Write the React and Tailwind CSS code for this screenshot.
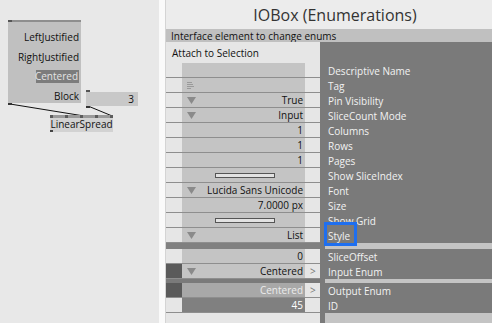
import React from 'react';

const Tri = () => (
  <svg width="9" height="7" viewBox="0 0 9 7" className="shrink-0">
    <polygon points="0,0 9,0 4.5,7" fill="#8a8a8a" />
  </svg>
);

const TagIcon = () => (
  <svg width="7" height="7" viewBox="0 0 7 7" className="shrink-0">
    <line x1="0" y1="0.5" x2="5" y2="0.5" stroke="#9a9a9a" strokeWidth="1" />
    <line x1="0" y1="2.5" x2="6" y2="2.5" stroke="#9a9a9a" strokeWidth="1" />
    <line x1="0" y1="4.5" x2="7" y2="4.5" stroke="#9a9a9a" strokeWidth="1" />
    <line x1="0" y1="6.5" x2="4" y2="6.5" stroke="#9a9a9a" strokeWidth="1" />
  </svg>
);

const Toggle = () => (
  <div className="mx-auto w-[60px] h-[5px] border border-[#555] bg-[#e2e2e2]" />
);

const rows = [
  { label: 'Descriptive Name' },
  { label: 'Tag', icon: 'tag' },
  { label: 'Pin Visibility', tri: true, value: 'True' },
  { label: 'SliceCount Mode', tri: true, value: 'Input' },
  { label: 'Columns', value: '1' },
  { label: 'Rows', value: '1' },
  { label: 'Pages', value: '1' },
  { label: 'Show SliceIndex', toggle: true },
  { label: 'Font', tri: true, value: 'Lucida Sans Unicode' },
  { label: 'Size', value: '7.0000 px' },
  { label: 'Show Grid', toggle: true },
  { label: 'Style', tri: true, value: 'List', focus: true },
];

const rows2 = [
  { label: 'SliceOffset', value: '0' },
  { label: 'Input Enum', tri: true, value: 'Centered', arrow: true, pin: true },
];

const rows3 = [
  { label: 'Output Enum', value: 'Centered', arrow: true, pin: true, box: 'bg-[#a8a8a8]', text: 'text-[#ececec]' },
  { label: 'ID', value: '45', box: 'bg-[#808080]', text: 'text-white' },
];

function ValueRow({ row }) {
  return (
    <div className="h-[15px] flex border-b border-[#8e8e8e]">
      <div className={`w-[16px] ${row.pin ? 'bg-[#5a5a5a]' : ''}`} />
      <div className={`w-[123px] flex items-center pl-[5px] pr-[2px] ${row.box || 'bg-[#c4c4c4]'}`}>
        {row.tri && <Tri />}
        {row.icon === 'tag' && <TagIcon />}
        {row.toggle ? (
          <Toggle />
        ) : (
          <span className={`ml-auto leading-none ${row.text || 'text-[#111]'}`}>{row.value}</span>
        )}
      </div>
      <div className="flex-1 flex items-center pl-[5px] text-[#777] leading-none">
        {row.arrow ? '>' : ''}
      </div>
    </div>
  );
}

function LabelRow({ row }) {
  return (
    <div className="h-[15px] flex items-center pl-[3px] text-[#f2f2f2] leading-none">
      <span className="relative">
        {row.label}
        {row.focus && (
          <span className="absolute left-[-4px] top-[-9px] w-[33px] h-[24px] border-[3px] border-[#1e6ff0]" />
        )}
      </span>
    </div>
  );
}

function Canvas() {
  const items = ['LeftJustified', 'RightJustified', 'Centered', 'Block'];
  return (
    <div className="w-[159px] h-full bg-[#e8e8e8] relative shrink-0">
      <svg className="absolute inset-0" width="159" height="323">
        <line x1="10" y1="104" x2="81" y2="115.5" stroke="#111" strokeWidth="1" />
        <line x1="88" y1="106" x2="111" y2="115.5" stroke="#111" strokeWidth="1" />
      </svg>

      {/* enum iobox */}
      <div className="absolute left-[8px] top-[20px] w-[73px] h-[83px] bg-[#c0c0c0] border-t-2 border-[#8e8e8e] flex flex-col items-end pr-[2px] pt-[8px] gap-[6px]">
        {items.map((it) => (
          <div
            key={it}
            className={`h-[14px] flex items-center leading-none ${
              it === 'Centered' ? 'bg-[#7c7c7c] text-[#e4e4e4] w-[43px] justify-end pr-[1px]' : 'text-[#111]'
            }`}
          >
            {it}
          </div>
        ))}
      </div>
      <div className="absolute left-[8px] top-[20px] w-[4px] h-[2px] bg-[#555]" />
      <div className="absolute left-[8px] top-[103px] w-[4px] h-[2px] bg-[#333]" />

      {/* value iobox */}
      <div className="absolute left-[86px] top-[92px] w-[52px] h-[14px] bg-[#c8c8c8] flex items-center justify-end pr-[4px] leading-none text-[#111]">
        3
      </div>
      <div className="absolute left-[86px] top-[90px] w-[4px] h-[2px] bg-[#555]" />
      <div className="absolute left-[86px] top-[106px] w-[4px] h-[2px] bg-[#333]" />

      {/* LinearSpread node */}
      <div className="absolute left-[50px] top-[115px] w-[63px] h-[17px] bg-[#d2d2d2] flex flex-col">
        <div className="h-[3px] bg-[#9a9a9a] flex justify-between">
          {[0, 1, 2, 3, 4].map((i) => (
            <div key={i} className="w-[3px] h-[3px] bg-[#5c5c5c]" />
          ))}
        </div>
        <div className="flex-1 flex items-center justify-center leading-none text-[#111]">LinearSpread</div>
        <div className="h-[2px] w-[3px] bg-[#444]" />
      </div>
    </div>
  );
}

export default function App() {
  return (
    <div className="w-[492px] h-[323px] flex overflow-hidden font-['Open_Sans',sans-serif] text-[10px]">
      <Canvas />
      <div className="w-[6px] h-full bg-[#fafafa] shrink-0" />
      <div className="w-[1px] h-full bg-[#d4d4d4] shrink-0" />

      <div className="flex-1 flex flex-col">
        <div className="h-[29px] bg-[#ececec] flex items-center justify-center text-[16px] text-[#333] leading-none pl-[12px]">
          IOBox (Enumerations)
        </div>
        <div className="h-[13px] bg-[#c0c0c0] flex items-center pl-[5px] text-[#111] leading-none">
          Interface element to change enums
        </div>

        <div className="flex-1 flex">
          {/* values */}
          <div className="w-[154px] bg-[#e6e6e6] flex flex-col">
            <div className="h-[21px] flex items-center pl-[6px] text-[#111] leading-none">Attach to Selection</div>
            {rows.map((r) => (
              <ValueRow key={r.label} row={r} />
            ))}
            <div className="h-[6px] bg-[#808080]" />
            {rows2.map((r) => (
              <ValueRow key={r.label} row={r} />
            ))}
            <div className="h-[4px] bg-[#7a7a7a]" />
            {rows3.map((r) => (
              <ValueRow key={r.label} row={r} />
            ))}
          </div>

          {/* labels */}
          <div className="flex-1 bg-[#7a7a7a] pl-[5px] flex flex-col">
            <div className="h-[21px]" />
            {rows.map((r) => (
              <LabelRow key={r.label} row={r} />
            ))}
            <div className="h-[6px] bg-[#c4c4c4]" />
            {rows2.map((r) => (
              <LabelRow key={r.label} row={r} />
            ))}
            <div className="h-[4px] bg-[#c4c4c4]" />
            {rows3.map((r) => (
              <LabelRow key={r.label} row={r} />
            ))}
            <div className="flex-1 bg-[#c4c4c4]" />
          </div>
        </div>
      </div>
    </div>
  );
}
